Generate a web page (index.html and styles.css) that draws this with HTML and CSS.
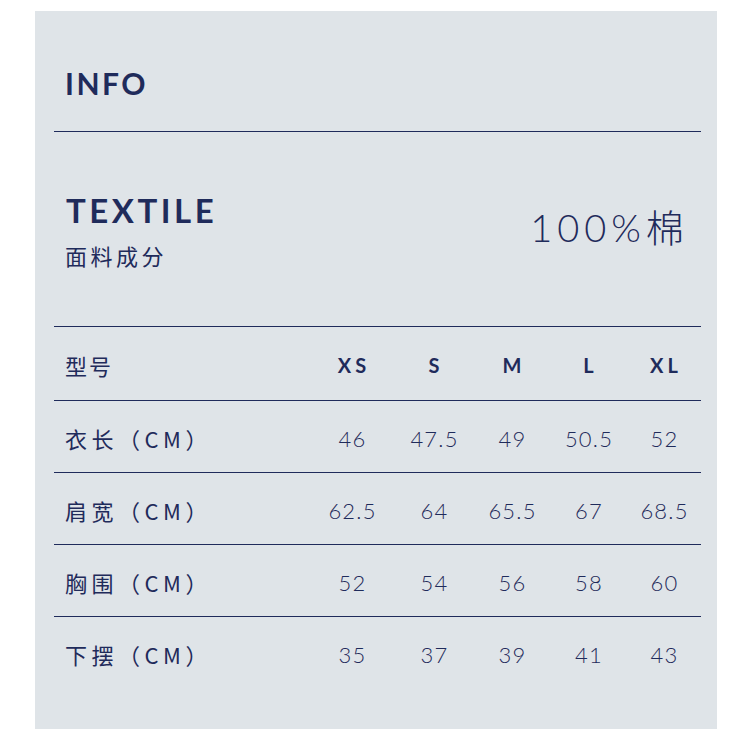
FILE: index.html
```html
<!DOCTYPE html>
<html lang="zh">
<head>
<meta charset="utf-8">
<title>INFO</title>
<link rel="stylesheet" href="styles.css">
</head>
<body>
<div class="panel">
  <header class="info-head">
    <h1 class="info-title">INFO</h1>
  </header>
  <section class="textile">
    <div class="textile-left">
      <div class="textile-title">TEXTILE</div>
      <div class="textile-sub">面料成分</div>
    </div>
    <div class="textile-value">100%棉</div>
  </section>
  <div class="size-table">
    <div class="row head">
      <div class="label label-short">型号</div>
      <div class="cell">XS</div><div class="cell">S</div><div class="cell">M</div><div class="cell">L</div><div class="cell">XL</div>
    </div>
    <div class="row">
      <div class="label">衣长（CM）</div>
      <div class="cell">46</div><div class="cell">47.5</div><div class="cell">49</div><div class="cell">50.5</div><div class="cell">52</div>
    </div>
    <div class="row">
      <div class="label">肩宽（CM）</div>
      <div class="cell">62.5</div><div class="cell">64</div><div class="cell">65.5</div><div class="cell">67</div><div class="cell">68.5</div>
    </div>
    <div class="row">
      <div class="label">胸围（CM）</div>
      <div class="cell">52</div><div class="cell">54</div><div class="cell">56</div><div class="cell">58</div><div class="cell">60</div>
    </div>
    <div class="row last">
      <div class="label">下摆（CM）</div>
      <div class="cell">35</div><div class="cell">37</div><div class="cell">39</div><div class="cell">41</div><div class="cell">43</div>
    </div>
  </div>
</div>
</body>
</html>
```

FILE: styles.css
```css
html, body {
  margin: 0;
  padding: 0;
  background: #ffffff;
}

body {
  font-family: Lato, "Noto Sans CJK SC", sans-serif;
  color: #1f2b5b;
}

.panel {
  box-sizing: border-box;
  margin: 11px 0 0 35px;
  width: 682px;
  height: 718px;
  background: #dfe4e8;
  padding: 0 16px 0 19px;
}

.info-head {
  height: 121px;
  border-bottom: 1px solid #1f2b5b;
  display: flex;
  align-items: center;
  padding-top: 23px;
  box-sizing: border-box;
}

.info-title {
  margin: 0 0 0 11px;
  font-family: Lato, sans-serif;
  font-weight: 700;
  font-size: 30px;
  letter-spacing: 2.5px;
  line-height: 1;
}

.textile {
  height: 194px;
  display: flex;
  justify-content: space-between;
  align-items: flex-start;
  box-sizing: border-box;
  padding: 62px 12px 0 12px;
}

.textile-title {
  font-family: Lato, sans-serif;
  font-weight: 700;
  font-size: 33px;
  letter-spacing: 3.5px;
  line-height: 1;
}

.textile-sub {
  margin-top: 17px;
  font-family: "Noto Sans CJK SC", sans-serif;
  font-size: 22px;
  letter-spacing: 3.5px;
  line-height: 1;
  margin-left: -1px;
}

.textile-value {
  margin-top: 13px;
  font-family: Lato, "Noto Sans CJK SC", sans-serif;
  font-weight: 300;
  font-size: 38px;
  letter-spacing: 5px;
  line-height: 1.1;
}

.size-table {
  display: flex;
  flex-direction: column;
}

.row {
  display: grid;
  grid-template-columns: 256px 84px 80px 76px 77px 1fr;
  align-items: center;
  box-sizing: border-box;
  height: 72px;
  border-top: 1px solid #1f2b5b;
  font-size: 22px;
}

.row.head {
  height: 74px;
}

.label {
  padding-left: 11px;
  font-family: "Noto Sans CJK SC", sans-serif;
  font-size: 22px;
  letter-spacing: 4.5px;
  padding-top: 2px;
}

.label-short {
  letter-spacing: 2px;
}

.cell {
  text-align: center;
  font-family: Lato, sans-serif;
  font-weight: 300;
  letter-spacing: 1.2px;
  padding-left: 1px;
  padding-top: 4px;
}

.head .cell {
  font-weight: 700;
  font-size: 20px;
  letter-spacing: 4px;
  padding-left: 4px;
  padding-top: 2px;
}
```
